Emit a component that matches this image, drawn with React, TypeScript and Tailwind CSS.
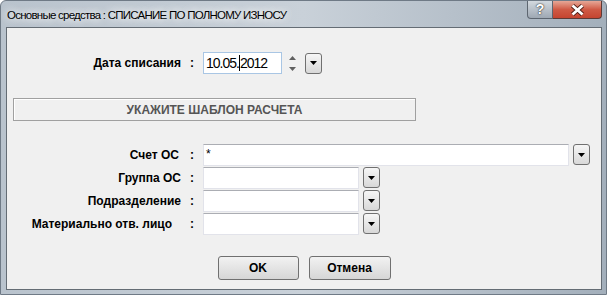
import { ReactNode } from "react"

const font = { fontFamily: '"Liberation Sans", Arial, sans-serif' }

function DropButton() {
  return (
    <div className="w-[17px] h-[21px] rounded-[3px] border border-[#707070] bg-gradient-to-b from-[#f6f6f6] to-[#d8d8d8] flex items-center justify-center shrink-0">
      <svg width="7" height="4" viewBox="0 0 7 4">
        <path d="M0 0H7L3.5 4Z" fill="#000" />
      </svg>
    </div>
  )
}

function Field({ label, pr = 0, width, children }: { label: string; pr?: number; width: string; children?: ReactNode }) {
  return (
    <div className="flex items-center h-[23px]">
      <div className="w-[174px] text-right font-bold text-[12px] text-black whitespace-nowrap" style={{ paddingRight: pr }}>
        {label}
      </div>
      <div className="w-[22px] pl-[9px] font-bold text-[12px]">:</div>
      <div className={`${width} h-[22px] bg-white border border-[#e2e3ea] border-t-[#abadb3] text-[12px] px-[2px] leading-[18px]`}>
        {children}
      </div>
      <div className="ml-[4px]">
        <DropButton />
      </div>
    </div>
  )
}

export default function App() {
  return (
    <div className="w-[607px] h-[295px] flex flex-col bg-gradient-to-r from-[#b9c3cd] via-[#c9d1d9] to-[#a3afbb] border border-[#6f7a86] rounded-t-[6px]" style={font}>
      <div className="h-[26px] flex items-start justify-between relative">
        <div
          className="pl-[6px] pt-[6px] text-[11.5px] text-black whitespace-nowrap tracking-[-0.75px]"
          style={{ textShadow: "0 0 8px #fff, 0 0 8px #fff" }}
        >
          Основные средства : СПИСАНИЕ ПО ПОЛНОМУ ИЗНОСУ
        </div>
        <div className="flex mr-[4px]">
          <div className="w-[26px] h-[18px] rounded-bl-[4px] border border-t-0 border-[#5d6670] bg-gradient-to-b from-[#d3d9df] to-[#9ea8b3] flex items-center justify-center text-white text-[14px] font-bold" style={{ textShadow: "0 0 2px #333, 0 0 1px #333" }}>
            ?
          </div>
          <div className="w-[49px] h-[18px] rounded-br-[4px] border border-t-0 border-l-0 border-[#5d3a36] bg-gradient-to-b from-[#e5a797] via-[#cf5a45] to-[#c54430] flex items-center justify-center">
            <svg width="15" height="12" viewBox="0 0 15 12">
              <path d="M2.5 1.5L12.5 10.5M12.5 1.5L2.5 10.5" stroke="#4a1a12" strokeWidth="4.4" />
              <path d="M2.5 1.5L12.5 10.5M12.5 1.5L2.5 10.5" stroke="#fff" strokeWidth="2.8" />
            </svg>
          </div>
        </div>
      </div>
      <div className="flex-1 ml-[5px] mr-[4px] mb-[4px] bg-[#f0f0f0] border border-[#646c74] flex flex-col">
        <div className="flex items-center mt-[24px] h-[22px]">
          <div className="w-[174px] text-right font-bold text-[12px]">Дата списания</div>
          <div className="w-[22px] pl-[9px] font-bold text-[12px]">:</div>
          <div className="w-[79px] h-[22px] bg-white border border-[#a9c6e4] text-[14px] leading-[20px] pl-[2px] tracking-[-1px]">
            10.05.<span className="border-l border-black">2012</span>
          </div>
          <div className="ml-[5px] w-[11px] h-[22px] flex flex-col items-center justify-center gap-[7px]">
            <svg width="7" height="4" viewBox="0 0 7 4"><path d="M0 4H7L3.5 0Z" fill="#606060" /></svg>
            <svg width="7" height="4" viewBox="0 0 7 4"><path d="M0 0H7L3.5 4Z" fill="#606060" /></svg>
          </div>
          <div className="ml-[7px]">
            <DropButton />
          </div>
        </div>
        <div className="mt-[24px] ml-[6px] w-[403px] h-[23px] border border-[#a0a0a0] shadow-[inset_1px_1px_0_#fff] flex items-center justify-center font-bold text-[12px] text-[#555]">
          УКАЖИТЕ ШАБЛОН РАСЧЕТА
        </div>
        <div className="mt-[22px] flex flex-col">
          <Field label="Счет ОС" pr={2} width="w-[366px]">*</Field>
          <Field label="Группа ОС" width="w-[156px]" />
          <Field label="Подразделение" pr={-2} width="w-[156px]" />
          <Field label="Материально отв. лицо" pr={9} width="w-[156px]" />
        </div>
        <div className="mt-[21px] flex justify-center gap-[10px]">
          <button className="w-[81px] h-[24px] rounded-[3px] border border-[#707070] bg-gradient-to-b from-[#f2f2f2] to-[#d6d6d6] font-bold text-[12px]">OK</button>
          <button className="w-[82px] h-[24px] rounded-[3px] border border-[#707070] bg-gradient-to-b from-[#f2f2f2] to-[#d6d6d6] font-bold text-[12px]">Отмена</button>
        </div>
      </div>
    </div>
  )
}
